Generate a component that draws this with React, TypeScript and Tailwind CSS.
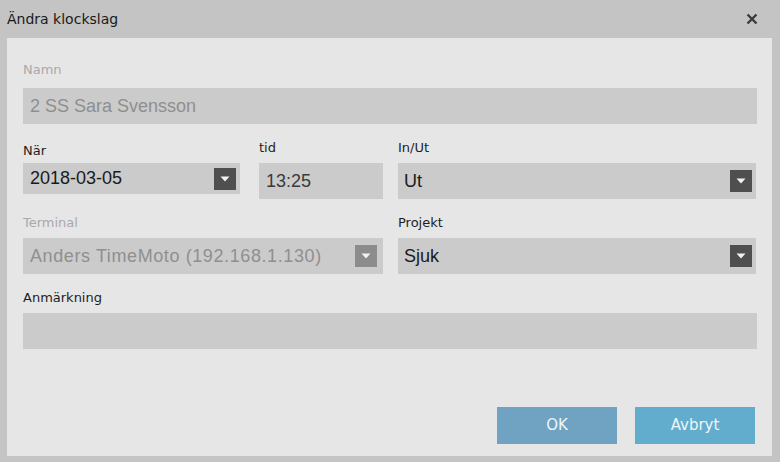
import React from "react";

const Caret: React.FC<{ disabled?: boolean }> = ({ disabled }) => (
    <div
        className={`w-[22px] h-[22px] flex items-center justify-center ${
            disabled ? "bg-[#8c8c8c]" : "bg-[#4f4f4f]"
        }`}
    >
        <svg width="10" height="6" viewBox="0 0 10 6">
            <path d="M0.5 0.5h9L5 5.5z" fill="#f2f2f2" />
        </svg>
    </div>
);

const Label: React.FC<{ children: React.ReactNode; muted?: boolean }> = ({
    children,
    muted,
}) => (
    <div
        className={`h-[16px] text-[13px] leading-[16px] font-['DejaVu_Sans',sans-serif] ${
            muted ? "text-[#a9a9a9]" : "text-[#1e1e1e]"
        }`}
    >
        {children}
    </div>
);

export default function App() {
    return (
        <div className="w-[780px] h-[462px] bg-[#c4c4c4] flex flex-col font-['Liberation_Sans',Arial,sans-serif]">
            <div className="h-[38px] flex items-center justify-between pl-[7px] pr-[22px]">
                <span className="text-[14px] text-[#1a1a1a] font-['DejaVu_Sans',sans-serif]">
                    Ändra klockslag
                </span>
                <svg width="12" height="12" viewBox="0 0 12 12">
                    <path
                        d="M1.5 1.5l9 9M10.5 1.5l-9 9"
                        stroke="#3a3a3a"
                        strokeWidth="2.4"
                    />
                </svg>
            </div>
            <div className="ml-[7px] w-[765px] h-[418px] bg-[#e6e6e6] pt-[24px] pl-[16px] pr-[15px] flex flex-col">
                <Label muted>Namn</Label>
                <div className="mt-[10px] h-[36px] bg-[#cbcbcb] flex items-center pl-[7px] text-[18px] text-[#8f8f8f]">
                    2 SS Sara Svensson
                </div>

                <div className="mt-[16px] grid grid-cols-[236px_139px_1fr]">
                    <div className="flex flex-col">
                        <div className="mt-[3px]">
                            <Label>När</Label>
                        </div>
                        <div className="mt-[4px] w-[217px] h-[31px] bg-[#cbcbcb] flex items-center justify-between pl-[7px] pr-[4px] text-[18px] text-[#1a1a1a]">
                            <span>2018-03-05</span>
                            <Caret />
                        </div>
                    </div>
                    <div className="flex flex-col">
                        <Label>tid</Label>
                        <div className="mt-[7px] w-[124px] h-[36px] bg-[#cbcbcb] flex items-center pl-[7px] text-[18px] text-[#3a3a3a]">
                            13:25
                        </div>
                    </div>
                    <div className="flex flex-col">
                        <Label>In/Ut</Label>
                        <div className="mt-[7px] w-[358px] h-[36px] bg-[#cbcbcb] flex items-center justify-between pl-[6px] pr-[4px] text-[18px] text-[#1a1a1a]">
                            <span>Ut</span>
                            <Caret />
                        </div>
                    </div>

                    <div className="col-span-2 mt-[16px] flex flex-col">
                        <Label muted>Terminal</Label>
                        <div className="mt-[7px] w-[360px] h-[36px] bg-[#cbcbcb] flex items-center justify-between pl-[7px] pr-[6px] text-[18px] text-[#8f8f8f]">
                            <span className="tracking-[0.6px]">Anders TimeMoto (192.168.1.130)</span>
                            <Caret disabled />
                        </div>
                    </div>
                    <div className="mt-[16px] flex flex-col">
                        <Label>Projekt</Label>
                        <div className="mt-[7px] w-[358px] h-[36px] bg-[#cbcbcb] flex items-center justify-between pl-[6px] pr-[4px] text-[18px] text-[#1a1a1a]">
                            <span>Sjuk</span>
                            <Caret />
                        </div>
                    </div>
                </div>

                <div className="mt-[16px]">
                    <Label>Anmärkning</Label>
                </div>
                <div className="mt-[7px] h-[36px] bg-[#cbcbcb]" />

                <div className="mt-[58px] flex justify-end gap-[18px] pr-[2px]">
                    <button className="w-[120px] h-[37px] bg-[#6fa3c1] text-[#eef5f9] text-[15px] font-['DejaVu_Sans',sans-serif]">
                        OK
                    </button>
                    <button className="w-[120px] h-[37px] bg-[#62adcd] text-[#eef5f9] text-[15px] font-['DejaVu_Sans',sans-serif]">
                        Avbryt
                    </button>
                </div>
            </div>
        </div>
    );
}
